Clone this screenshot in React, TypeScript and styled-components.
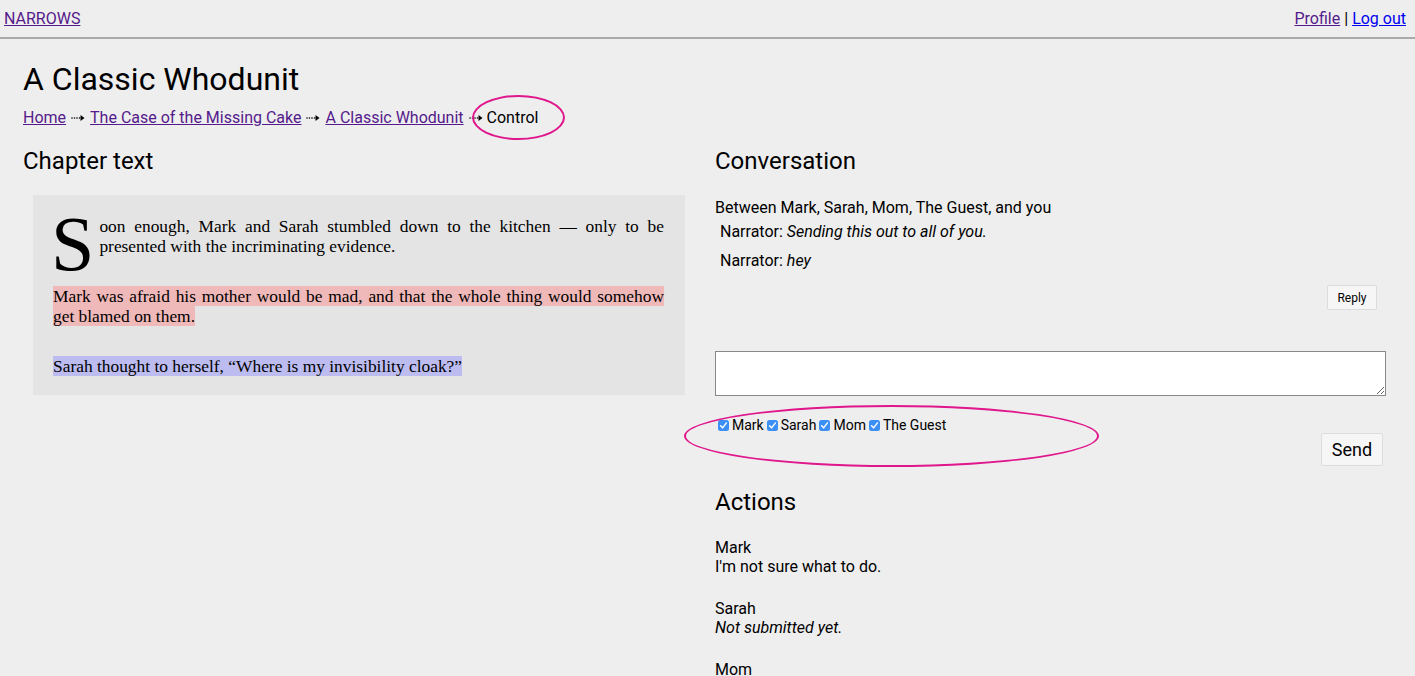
import React from "react";
import styled, { createGlobalStyle } from "styled-components";

const Global = createGlobalStyle`
  html, body { margin: 0; padding: 0; background: #eeeeee; }
  body { font-family: Roboto, "Liberation Sans", sans-serif; color: #000; font-size: 16px; }
  a { color: #551a8b; }
`;

const Header = styled.header`
  display: flex;
  justify-content: space-between;
  align-items: center;
  height: 37px;
  padding: 0 9px 0 4px;
  border-bottom: 2px solid #aaaaaa;
  font-size: 16px;
`;

const HeaderLinks = styled.div`
  display: flex;
  gap: 4px;
  a.blue { color: #0000ee; }
`;

const Main = styled.main`
  padding: 22px 29px 0 23px;
`;

const Title = styled.h1`
  margin: 0;
  font-size: 32px;
  font-weight: 400;
  line-height: 37px;
`;

const Crumbs = styled.nav`
  display: flex;
  align-items: center;
  gap: 5px;
  margin-top: 10px;
  line-height: 19px;
`;

const ArrowSvg = styled.svg`
  width: 14px;
  height: 8px;
`;

const Arrow = () => (
  <ArrowSvg viewBox="0 0 14 8">
    <circle cx="1" cy="4" r="0.8" fill="#000" />
    <circle cx="3.5" cy="4" r="0.8" fill="#000" />
    <circle cx="6" cy="4" r="0.8" fill="#000" />
    <circle cx="8.5" cy="4" r="0.8" fill="#000" />
    <path d="M9.5 1 L13.5 4 L9.5 7 Z" fill="#000" />
  </ArrowSvg>
);

const Current = styled.span`
  position: relative;
  margin-left: -1px;
`;

const Ellipse = styled.span<{ $w: number; $h: number; $l: number; $t: number }>`
  position: absolute;
  left: ${(p) => p.$l}px;
  top: ${(p) => p.$t}px;
  width: ${(p) => p.$w}px;
  height: ${(p) => p.$h}px;
  border: 2px solid #e0168c;
  border-radius: 50%;
  box-sizing: border-box;
  pointer-events: none;
`;

const Columns = styled.div`
  display: grid;
  grid-template-columns: 662px 1fr;
  gap: 30px;
  margin-top: 20px;
`;

const Heading = styled.h2`
  margin: 0;
  font-size: 24px;
  font-weight: 400;
  line-height: 28px;
`;

const ChapterBox = styled.div`
  margin: 20px 0 0 10px;
  background: #e4e4e4;
  padding: 21px 21px 19px 20px;
  font-family: "Liberation Serif", serif;
  font-size: 17.4px;
  line-height: 20px;
  text-align: justify;
`;

const Para = styled.p`
  margin: 0 0 30px;
  &:last-child { margin-bottom: 0; }
`;

const DropCap = styled.span`
  float: left;
  font-size: 78px;
  line-height: 56px;
  margin: 0 5px 0 -2px;
`;

const Mark = styled.span<{ $c: string }>`
  background: ${(p) => p.$c};
`;

const Right = styled.section`
  display: flex;
  flex-direction: column;
`;

const Between = styled.div`
  margin-top: 24px;
  font-size: 16px;
  line-height: 18px;
`;

const Msg = styled.div`
  font-size: 16px;
  line-height: 18px;
  margin: 6px 0 0 5px;
  & + & { margin-top: 11px; }
  em { font-style: italic; }
`;

const Btn = styled.button<{ $size: number; $w: number; $h: number }>`
  align-self: flex-end;
  width: ${(p) => p.$w}px;
  height: ${(p) => p.$h}px;
  font-family: Roboto, sans-serif;
  font-size: ${(p) => p.$size}px;
  background: #f6f6f6;
  border: 1px solid #dcdcdc;
  border-radius: 2px;
  padding: 0;
  color: #000;
`;

const Reply = styled(Btn)`
  margin: 15px 9px 0 0;
`;

const Text = styled.textarea`
  margin-top: 41px;
  height: 45px;
  box-sizing: border-box;
  border: 1px solid #888;
  background: #fff;
  resize: vertical;
  width: 100%;
`;

const Recipients = styled.div`
  position: relative;
  display: flex;
  align-items: center;
  margin-top: 21px;
  font-size: 14px;
  line-height: 16px;
`;

const Recipient = styled.label`
  display: flex;
  align-items: center;
  input { position: absolute; opacity: 0; width: 0; height: 0; margin: 0; }
`;

const Box = styled.span`
  display: inline-flex;
  align-items: center;
  justify-content: center;
  width: 11px;
  height: 11px;
  border-radius: 2.5px;
  background: #3b8ff5;
  margin: 0 3px 0 3px;
  svg { width: 9px; height: 9px; }
`;

const Send = styled(Btn)`
  margin: 0 3px 0 0;
`;

const Actions = styled.div`
  margin-top: 22px;
`;

const ActionList = styled.div`
  margin-top: 22px;
  display: flex;
  flex-direction: column;
  gap: 23px;
  font-size: 16px;
  line-height: 19px;
`;

export default function App() {
  return (
    <>
      <Global />
      <Header>
        <a href="#">NARROWS</a>
        <HeaderLinks>
          <a href="#">Profile</a>|<a className="blue" href="#">Log out</a>
        </HeaderLinks>
      </Header>
      <Main>
        <Title>A Classic Whodunit</Title>
        <Crumbs>
          <a href="#">Home</a>
          <Arrow />
          <a href="#">The Case of the Missing Cake</a>
          <Arrow />
          <a href="#">A Classic Whodunit</a>
          <Arrow />
          <Current>
            Control
            <Ellipse $l={-15} $t={-13} $w={93} $h={45} />
          </Current>
        </Crumbs>
        <Columns>
          <section>
            <Heading>Chapter text</Heading>
            <ChapterBox>
              <Para>
                <DropCap>S</DropCap>oon enough, Mark and Sarah stumbled down to the kitchen — only to be
                presented with the incriminating evidence.
              </Para>
              <Para>
                <Mark $c="#f0b9b9">
                  Mark was afraid his mother would be mad, and that the whole thing would somehow get
                  blamed on them.
                </Mark>
              </Para>
              <Para>
                <Mark $c="#bcbcf0">Sarah thought to herself, “Where is my invisibility cloak?”</Mark>
              </Para>
            </ChapterBox>
          </section>
          <Right>
            <Heading>Conversation</Heading>
            <Between>Between Mark, Sarah, Mom, The Guest, and you</Between>
            <Msg>
              Narrator: <em>Sending this out to all of you.</em>
            </Msg>
            <Msg>
              Narrator: <em>hey</em>
            </Msg>
            <Reply $size={12} $w={50} $h={25}>Reply</Reply>
            <Text />
            <Recipients>
              {["Mark", "Sarah", "Mom", "The Guest"].map((n) => (
                <Recipient key={n}>
                  <input type="checkbox" defaultChecked />
                  <Box>
                    <svg viewBox="0 0 8 8">
                      <path d="M1.4 4.2 L3.2 6.1 L6.6 1.7" stroke="#fff" strokeWidth="1.3" fill="none" strokeLinecap="round" strokeLinejoin="round" />
                    </svg>
                  </Box>
                  {n}
                </Recipient>
              ))}
              <Ellipse $l={-31} $t={-12} $w={415} $h={62} />
            </Recipients>
            <Send $size={18} $w={62} $h={33}>Send</Send>
            <Actions>
              <Heading>Actions</Heading>
              <ActionList>
                <div>
                  Mark
                  <br />
                  I'm not sure what to do.
                </div>
                <div>
                  Sarah
                  <br />
                  <em>Not submitted yet.</em>
                </div>
                <div>Mom</div>
              </ActionList>
            </Actions>
          </Right>
        </Columns>
      </Main>
    </>
  );
}
